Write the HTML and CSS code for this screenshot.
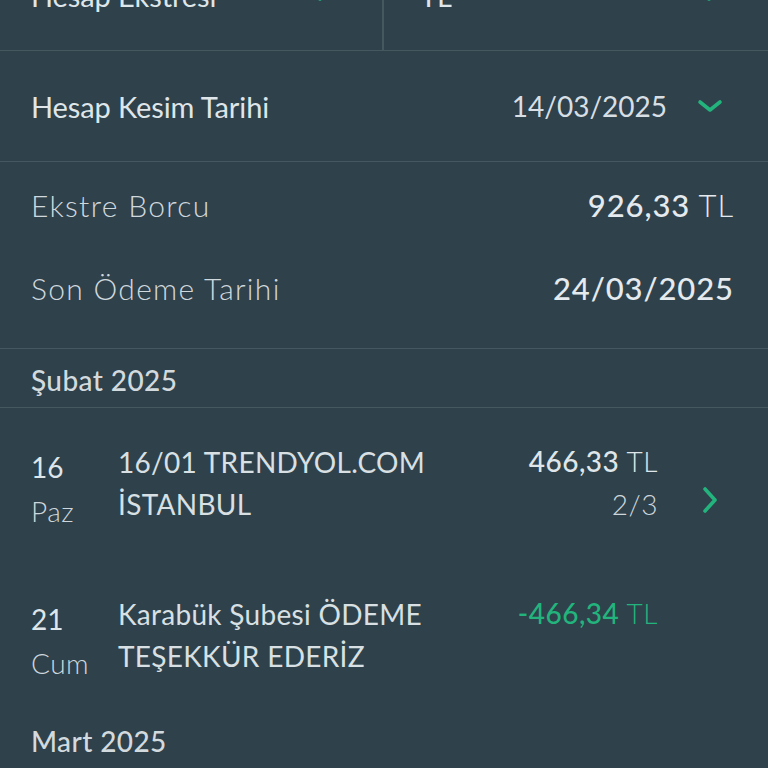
FILE: index.html
```html
<!DOCTYPE html>
<html lang="tr">
<head>
<meta charset="utf-8">
<link rel="stylesheet" href="styles.css">
</head>
<body>
<div class="page">
  <div class="row split">
    <div class="cell left">
      <span class="label">Hesap Ekstresi</span>
      <svg class="chev-down" viewBox="0 0 26 14"><path d="M3 3 L13 11 L23 3"/></svg>
    </div>
    <div class="cell right">
      <span class="label">TL</span>
      <svg class="chev-down" viewBox="0 0 26 14"><path d="M3 3 L13 11 L23 3"/></svg>
    </div>
  </div>
  <div class="row select">
    <span class="label">Hesap Kesim Tarihi</span>
    <span class="value-wrap">
      <span class="date">14/03/2025</span>
      <svg class="chev-down" viewBox="0 0 26 14"><path d="M3 3 L13 11 L23 3"/></svg>
    </span>
  </div>
  <div class="summary">
    <div class="sum-line">
      <span class="sum-label">Ekstre Borcu</span>
      <span class="sum-value"><b>926,33</b> TL</span>
    </div>
    <div class="sum-line">
      <span class="sum-label">Son Ödeme Tarihi</span>
      <span class="sum-value"><b>24/03/2025</b></span>
    </div>
  </div>
  <div class="month bordered">Şubat 2025</div>
  <div class="tx first">
    <div class="day"><span class="dnum">16</span><span class="dname">Paz</span></div>
    <div class="desc"><span>16/01 TRENDYOL.COM</span><span>İSTANBUL</span></div>
    <div class="amt"><span><b>466,33</b> TL</span><span class="inst">2/3</span></div>
    <svg class="chev-right" viewBox="0 0 16 28"><path d="M3 3 L13 14 L3 25"/></svg>
  </div>
  <div class="tx second">
    <div class="day"><span class="dnum">21</span><span class="dname">Cum</span></div>
    <div class="desc"><span>Karabük Şubesi ÖDEME</span><span>TEŞEKKÜR EDERİZ</span></div>
    <div class="amt green"><span><b>-466,34</b> TL</span></div>
    <span class="chev-space"></span>
  </div>
  <div class="month">Mart 2025</div>
</div>
</body>
</html>
```
FILE: styles.css
```css
html, body {
  margin: 0;
  padding: 0;
  background: #2f414b;
  height: 768px;
  overflow: hidden;
}
.page {
  margin-top: -60px;
  font-family: Lato, "Noto Sans", sans-serif;
  color: #dfe6ea;
}
.row {
  height: 110px;
  border-bottom: 1px solid #46585f;
  box-sizing: content-box;
}
.split {
  display: flex;
}
.cell {
  display: flex;
  align-items: center;
  justify-content: space-between;
  box-sizing: border-box;
}
.cell.left {
  width: 384px;
  padding: 0 49px 0 31px;
  border-right: 2px solid #46585f;
}
.cell.right {
  flex: 1;
  padding: 0 46px 0 36px;
}
.label {
  font-size: 29px;
  font-weight: 400;
  letter-spacing: -0.1px;
}
.chev-down {
  width: 26px;
  height: 14px;
  fill: none;
  stroke: #22b47c;
  stroke-width: 3.6;
  stroke-linecap: round;
  stroke-linejoin: round;
}
.select {
  display: flex;
  align-items: center;
  justify-content: space-between;
  padding: 0 45px 0 31px;
}
.value-wrap {
  display: flex;
  align-items: center;
  gap: 30px;
}
.date {
  font-size: 28px;
  color: #d7dfe4;
}
.summary {
  padding: 1px 34px 19px 31px;
  border-bottom: 1px solid #46585f;
}
.sum-line {
  height: 83px;
  display: flex;
  align-items: center;
  justify-content: space-between;
}
.sum-label {
  font-size: 30px;
  font-weight: 300;
  letter-spacing: 1.3px;
  color: #cfd8dd;
}
.sum-value {
  font-size: 31px;
  font-weight: 300;
  letter-spacing: 0.9px;
  color: #e4eaee;
}
.sum-value b {
  font-weight: 500;
}
.month {
  font-size: 28px;
  font-weight: 500;
  letter-spacing: 0.4px;
  color: #d2dade;
  padding: 5px 31px 0;
  height: 53px;
  line-height: 52px;
}
.month.bordered {
  border-bottom: 1px solid #46585f;
}
.tx {
  display: flex;
  align-items: center;
  padding: 0 50px 0 31px;
}
.tx.first {
  height: 170px;
  padding-top: 11px;
  box-sizing: content-box;
}
.tx.second {
  height: 105px;
  align-items: flex-start;
  padding-top: 8px;
  padding-bottom: 8px;
}
.tx.first .day, .tx.first .desc, .tx.first .amt {
  align-self: flex-start;
  padding-top: 26px;
}
.day {
  width: 87px;
  display: flex;
  flex-direction: column;
  font-size: 28px;
  font-weight: 400;
  line-height: 44px;
}
.dname {
  font-weight: 300;
  color: #cdd6db;
  letter-spacing: 0.5px;
}
.desc {
  flex: 1;
  display: flex;
  flex-direction: column;
  font-size: 28px;
  line-height: 41.5px;
  font-weight: 400;
  letter-spacing: 0.3px;
  color: #d8e0e4;
  margin-top: -3px;
}
.amt {
  display: flex;
  flex-direction: column;
  align-items: flex-end;
  font-size: 28px;
  line-height: 43px;
  font-weight: 300;
  letter-spacing: 0.5px;
  margin-top: -5px;
}
.amt b {
  font-weight: 500;
}
.inst {
  font-weight: 300;
  color: #cdd6db;
}
.green {
  color: #22b47c;
}
.chev-right {
  width: 16px;
  height: 28px;
  margin-left: 44px;
  margin-top: -9px;
  fill: none;
  stroke: #22b47c;
  stroke-width: 3.6;
  stroke-linecap: round;
  stroke-linejoin: round;
}
.chev-space {
  width: 16px;
  margin-left: 44px;
}
```
